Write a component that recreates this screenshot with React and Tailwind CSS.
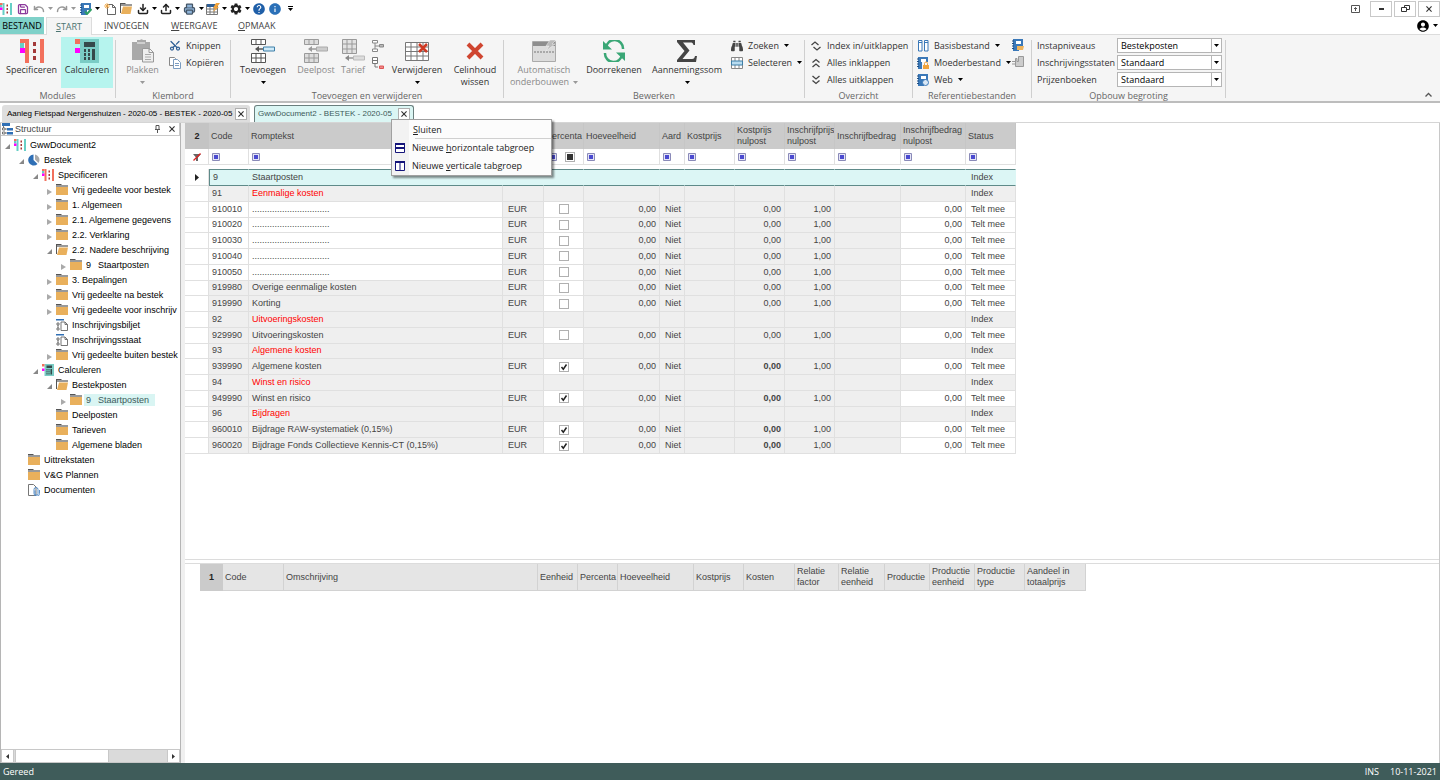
import React, { useState } from 'react';
import { Download, Upload, Undo, Redo, Save, Printer, Scissors } from 'lucide-react';
import { MdAccountCircle, MdHelp, MdInfo, MdSettings } from 'react-icons/md';
import { FaBinoculars } from 'react-icons/fa';

const Caret = ({ className = 'text-black' }) => (
  <svg className={`w-[5px] h-[3px] shrink-0 ${className}`} viewBox="0 0 5 3">
    <path d="M0 0h5L2.5 3z" fill="currentColor" />
  </svg>
);

/* ---------- Icons ---------- */

const LogoIcon = ({ color = '#66cfc6', className = 'w-3 h-3' }) => (
  <svg className={`shrink-0 ${className}`} viewBox="0 0 24 24">
    <path d="M5 0h4v24H5zM20 0h4v24h-4z" fill={color} />
    <path d="M0 0h5v4H0z" fill="#f2705c" />
    <path d="M0 4h4v5H0z" fill="#66cfc6" />
    <path d="M0 9h5v5H0z" fill="#f0f" />
    <path d="M13 3h3v4h-3zM13 10h3v4h-3zM13 17h3v4h-3z" fill="#a33a3a" />
  </svg>
);

const CalcIcon = ({ className = 'w-6 h-6' }) => (
  <svg className={`shrink-0 ${className}`} viewBox="0 0 24 24">
    <path d="M5 0h19v24H5z" fill="#7accc5" />
    <path d="M0 0h5v5H0z" fill="#f2705c" />
    <path d="M0 9h5v5H0z" fill="#f0f" />
    <path d="M9 3h11v5H9zM9 10h2v3H9zM9 14h2v3H9zM9 18h2v3H9zM13 10h2v3h-2zM13 14h2v3h-2zM13 18h2v3h-2zM17 10h3v11h-3z" fill="#35484a" />
  </svg>
);

const FolderIcon = ({ open }) => (
  <svg className="w-3 h-[11px] shrink-0" viewBox="0 0 12 11">
    <path d="M0 0h5l1 1H0z" fill="#555" />
    <path d="M0 1h12v2H0z" fill="#999" />
    {open ? (
      <>
        <path d="M0 1h1v9H0z" fill="#555" />
        <path d="M3 3.500h9L10.500 11H1z" fill="#e9b05c" />
      </>
    ) : (
      <path d="M0 3h12v8H0z" fill="#e9b05c" />
    )}
  </svg>
);

const PieIcon = () => (
  <svg className="w-3 h-3 shrink-0" viewBox="0 0 12 12">
    <path d="M5.500 0.500A5.500 5.500 0 1 0 9.500 10L5.500 6z" fill="#2f6fb5" />
    <path d="M7 0.500A5.500 5.500 0 0 1 10.500 9L7 5.500z" fill="#a9a9a9" />
  </svg>
);

const PageIcon = () => (
  <svg className="w-3 h-3 shrink-0" viewBox="0 0 12 12" fill="none" stroke="#666" strokeWidth="0.900">
    <path d="M0 0h8v1.500H0z" fill="#2f6fb5" stroke="none" />
    <path d="M5 3h4l2.500 2.500v6H5zM9 3v2.500h2.500" fill="#fff" />
    <path d="M1 4h2v2H1zM1 9h2v2H1zM2 6v3" />
  </svg>
);

const DocIcon = () => (
  <svg className="w-3 h-3 shrink-0" viewBox="0 0 12 12" fill="none">
    <path d="M0.500 0.500h5l2.500 2.500v8.500H0.500z" fill="#fff" stroke="#777" />
    <path d="M7 6.500v3a1.500 1.500 0 0 0 3 0V5.500a2 2 0 0 0-4 0v4a2.500 2.500 0 0 0 5.500 0V6" stroke="#4a86c5" strokeWidth="0.900" />
  </svg>
);

const BookIcon = ({ badge, className = 'w-3 h-3' }) => (
  <svg className={`shrink-0 ${className}`} viewBox="0 0 12 12">
    <path d="M1 0h10v7H7v5H1z" fill="#3a78b8" />
    <path d="M4 2h5v3H4z" fill="#fff" />
    <path d="M0 2h2M0 4.500h2M0 7h2M0 9.500h2" stroke="#1f4f83" />
    {badge === 'check' && <path d="M5 8.500l2 2.500 4.500-5" fill="none" stroke="#2f9e64" strokeWidth="2" />}
    {badge === 'lock' && (
      <>
        <path d="M5 5h7v7H5z" fill="#f5f5f5" />
        <path d="M6 8h6v4H6z" fill="#f0a33c" />
        <path d="M7.500 8V6.500a1.500 1.500 0 0 1 3 0V8" fill="none" stroke="#f0a33c" />
      </>
    )}
    {badge === 'web' && <circle cx="8.500" cy="8.500" r="3" fill="#d9e7f5" stroke="#3a78b8" />}
    {badge === 'folder' && <path d="M5 7h7l-1 4H5z" fill="#f0b45c" />}
  </svg>
);

const InsertIcon = ({ muted }) => {
  const line = muted ? '#9a9a9a' : '#555';
  return (
    <svg className="w-6 h-6" viewBox="0 0 24 24" fill="none" stroke={line}>
      <path d="M0.500 0.500h14v5h-14zM5 0.500v5M10 0.500v5M0.500 14.500h14v9h-14zM0.500 19h14M5 14.500v9M10 14.500v9" fill={muted ? '#ddd' : '#fff'} />
      <path d="M12.500 8h11v4h-11z" fill={muted ? '#ccc' : '#cfeaf8'} stroke={muted ? '#aaa' : '#3d7fa8'} />
      <path d="M12 10H6" strokeWidth="1.500" />
      <path d="M4 10l4-3v6z" fill={line} stroke="none" />
    </svg>
  );
};

const TariefIcon = () => (
  <svg className="w-6 h-6" viewBox="0 0 24 24" fill="none" stroke="#999">
    <path d="M1.500 0.500h14v14h-14zM6 0.500v14M11 0.500v14M1.500 5h14M1.500 10h14" fill="#e2e2e2" />
    <path d="M12.500 17h11v4h-11z" fill="#ddd" stroke="#bbb" />
    <path d="M12 19H7" strokeWidth="1.500" />
    <path d="M4 19l4-3v6z" fill="#888" stroke="none" />
  </svg>
);

const BranchIcon = () => (
  <svg className="w-3 h-3" viewBox="0 0 12 12" fill="none" stroke="#888">
    <path d="M0.500 0.500h5v2.500h-5zM0.500 9h5v2.500h-5zM3 3v6M3 6h4" fill="#fff" />
    <path d="M7.500 4.500h4v2.500h-4z" fill="#bbb" />
  </svg>
);

const BranchRemoveIcon = () => (
  <svg className="w-3 h-3" viewBox="0 0 12 12" fill="none" stroke="#777">
    <path d="M0.500 0.500h5v6h-5zM0.500 3.500h5M3 6.500V10h3" fill="#fff" />
    <path d="M7.500 9h4v2.500h-4z" fill="#e88" stroke="#d55" />
  </svg>
);

const DeleteGridIcon = () => (
  <svg className="w-6 h-[22px]" viewBox="0 0 24 22" fill="none" stroke="#777">
    <path d="M0.500 2.500h23v18h-23zM6 2.500v18M12 2.500v18M18 2.500v18M0.500 7h23M0.500 11.500h23M0.500 16h23" fill="#fff" />
    <path d="M14 4l8 8M22 4l-8 8" stroke="#cf3a24" strokeWidth="2.500" />
  </svg>
);

const RedCrossIcon = () => (
  <svg className="w-[18px] h-[18px]" viewBox="0 0 18 18">
    <path d="M2 2l14 14M16 2L2 16" stroke="#cf4530" strokeWidth="4" />
  </svg>
);

const PasteIcon = () => (
  <svg className="w-[22px] h-6" viewBox="0 0 22 24">
    <path d="M0 3h5V1h3a2 2 0 0 1 3 0h3v2h4v8h-8v10H0z" fill="#a9a9a9" />
    <path d="M5 4h8" stroke="#f5f5f5" />
    <path d="M10.500 9.500h7l4 4v9.500h-11zM17 9.500v4h4.500" fill="#eee" stroke="#999" />
    <path d="M13 15.500h6M13 18h6M13 20.500h6" stroke="#aaa" />
  </svg>
);

const CopyIcon = () => (
  <svg className="w-3 h-3" viewBox="0 0 12 12" fill="#fff" stroke="#888">
    <path d="M0.500 0.500h5l1 1v7h-6z" />
    <path d="M4.500 2.500h4l3 3v6h-7z" stroke="#7b9cc0" />
    <path d="M6 6.500h4M6 8.500h4" stroke="#7b9cc0" />
  </svg>
);

const AutoIcon = () => (
  <svg className="w-6 h-[22px]" viewBox="0 0 24 22">
    <path d="M0.500 1.500h23v20h-23z" fill="#dcdcdc" stroke="#aaa" />
    <path d="M1 2h22v4H1z" fill="#8e8e8e" />
    <path d="M2 12h20" stroke="#777" strokeDasharray="2 1" />
    <path d="M18 0h6l-4 4h3l-9 7 3-5h-3z" fill="#bbb" stroke="#f5f5f5" strokeWidth="0.500" />
  </svg>
);

const RecalcIcon = () => (
  <svg className="w-6 h-[22px]" viewBox="0 0 24 22" fill="none" stroke="#3aa776" strokeWidth="2.500">
    <path d="M4 8A8.500 8.500 0 0 1 21 9" />
    <path d="M20 14A8.500 8.500 0 0 1 3 13" />
    <path d="M1 1v8.500h9zM23 21v-8.500h-9z" fill="#3aa776" stroke="none" />
  </svg>
);

const SigmaIcon = () => (
  <svg className="w-5 h-[22px]" viewBox="0 0 20 22">
    <path d="M0 0h18v5h-1.500c-.5-2-1.500-2.500-3-2.500H6l6.500 8L5.500 19H15c2 0 2.500-1 3-3h2l-1 6H0v-2l7.500-9L0 2z" fill="#444" />
  </svg>
);

const SelectIcon = () => (
  <svg className="w-3 h-3" viewBox="0 0 12 12" fill="#fff" stroke="#888">
    <path d="M0.500 0.500h11v11h-11zM4 0.500v11M8 0.500v11" />
    <path d="M0.500 4h11v4h-11z" fill="#b9dcf0" stroke="#3d7fa8" />
  </svg>
);

const FoldIcon = ({ d }) => (
  <svg className="w-[10px] h-[10px]" viewBox="0 0 10 10" fill="none" stroke="#444" strokeWidth="1.300">
    <path d={d} />
  </svg>
);

const ColumnsIcon = () => (
  <svg className="w-[11px] h-3" viewBox="0 0 11 12" fill="#fff" stroke="#3a78b8">
    <path d="M0.500 0.500h3.500v10.500H0.500zM6.500 0.500H10v10.500H6.500z" />
    <path d="M0.500 2.500H4M6.500 2.500H10" />
  </svg>
);

const TableFlashIcon = () => (
  <svg className="w-[14px] h-3" viewBox="0 0 14 12" fill="#fff" stroke="#777">
    <path d="M0.500 1.500h11v10h-11zM0.500 6h11M0.500 9h11M4 1.500v10M8 1.500v10" />
    <path d="M1 1h8v3H1z" fill="#2f5f95" stroke="none" />
    <path d="M10 0h4l-3 4h2l-6 5 2-4H7z" fill="#f0a33c" stroke="none" />
  </svg>
);

const NewDocIcon = () => (
  <svg className="w-3 h-3" viewBox="0 0 12 12">
    <path d="M3.500 1.500h5l3 3v7h-8z" fill="#fff" stroke="#666" />
    <path d="M8.500 1.500v3h3" fill="none" stroke="#666" />
    <path d="M3 0v6M0 3h6M1 1l4 4M5 1L1 5" stroke="#f0a33c" strokeWidth="0.800" />
  </svg>
);

const StructIcon = () => (
  <svg className="w-3 h-3 shrink-0" viewBox="0 0 12 12">
    <path d="M1 0h8v3H1zM6 5h6v2.500H6zM6 9h6v2.500H6z" fill="#2f6fb5" />
    <path d="M1.500 5h2.500v2H1.500zM1.500 9h2.500v2H1.500zM4 6h2M4 10h2M2.500 3v2" fill="#fff" stroke="#555" strokeWidth="0.800" />
  </svg>
);

const CrossIcon = () => (
  <svg className="w-[6px] h-[6px]" viewBox="0 0 7 7" stroke="#333" strokeWidth="1.300">
    <path d="M0.500 0.500l6 6M6.500 0.500l-6 6" />
  </svg>
);

/* ---------- Ribbon ---------- */

const BigButton = ({ icon, lines, width, caret, muted, active, inlineCaret }) => (
  <button
    type="button"
    className={`${width} h-[51px] shrink-0 flex flex-col items-center text-center pt-px leading-[12px] whitespace-nowrap ${
      active ? 'bg-[#b6f4ee]' : ''
    } ${muted ? 'text-[#8a8a8a]' : 'text-[#333]'}`}
  >
    <span className="h-[26px] flex items-center justify-center">{icon}</span>
    {lines.map((line, i) => (
      <span key={line} className="flex items-center gap-1">
        {line}
        {inlineCaret && i === lines.length - 1 && <Caret className="text-[#999]" />}
      </span>
    ))}
    {caret && (
      <span className="h-3 flex items-center">
        <Caret className={muted ? 'text-[#999]' : 'text-black'} />
      </span>
    )}
  </button>
);

const SmallButton = ({ icon, children, caret }) => (
  <button type="button" className="h-[17px] flex items-center gap-[5px] whitespace-nowrap text-[#333]">
    <span className="w-3 flex justify-center">{icon}</span>
    {children}
    {caret && <Caret />}
  </button>
);

const Group = ({ title, width, children }) => (
  <section className={`${width} shrink-0 flex flex-col`}>
    <div className="flex border-r border-[#cfcfcf] mt-1 h-[58px]">
      <div className="flex flex-col w-full -mt-[3px]">
        <div className="flex h-[53px] shrink-0">{children}</div>
        <h2 className="shrink-0 text-center text-[#666] leading-[12px]">{title}</h2>
      </div>
    </div>
  </section>
);

const LabelledSelect = ({ id, label, value }) => (
  <div className="h-[17px] flex items-center">
    <label htmlFor={id} className="w-20 whitespace-nowrap">{label}</label>
    <div className="grid w-[105px] h-[15px] bg-white border border-[#b5b5b5]">
      <select id={id} defaultValue={value} className="col-start-1 row-start-1 appearance-none pl-[3px] leading-[13px] text-black">
        <option>{value}</option>
      </select>
      <span className="col-start-1 row-start-1 justify-self-end w-[10px] border-l border-[#b5b5b5] flex items-center justify-center pointer-events-none">
        <Caret />
      </span>
    </div>
  </div>
);

const quickItems = [
  { name: 'Opslaan', icon: <Save className="w-3 h-3 text-[#8c3a9c]" strokeWidth={2.5} />, width: 'w-4' },
  { name: 'Ongedaan maken', icon: <Undo className="w-3 h-3 text-[#999]" strokeWidth={3} />, width: 'w-4', caret: 'text-[#999]' },
  { name: 'Opnieuw', icon: <Redo className="w-3 h-3 text-[#999]" strokeWidth={3} />, width: 'w-4', caret: 'text-[#999]' },
  { name: 'Controleren', icon: <BookIcon badge="check" />, width: 'w-[17px]', caret: 'text-black' },
  { name: 'Nieuw', icon: <NewDocIcon />, width: 'w-[17px]' },
  { name: 'Openen', icon: <FolderIcon open />, width: 'w-4' },
  { name: 'Importeren', icon: <Download className="w-3 h-3 text-[#222]" strokeWidth={3} />, width: 'w-[17px]', caret: 'text-black' },
  { name: 'Exporteren', icon: <Upload className="w-3 h-3 text-[#222]" strokeWidth={3} />, width: 'w-4', caret: 'text-black' },
  { name: 'Afdrukken', icon: <Printer className="w-[13px] h-3 text-[#456]" fill="#8fb4d8" strokeWidth={2.5} />, width: 'w-[17px]', caret: 'text-black' },
  { name: 'Tabel', icon: <TableFlashIcon />, width: 'w-4', caret: 'text-black' },
  { name: 'Instellingen', icon: <MdSettings className="w-[14px] h-[14px] text-[#222]" />, width: 'w-4', caret: 'text-black' },
  { name: 'Help', icon: <MdHelp className="w-[14px] h-[14px] text-[#1f5fa8]" />, width: 'w-4' },
  { name: 'Info', icon: <MdInfo className="w-[14px] h-[14px] text-[#2a70b8]" />, width: 'w-4' },
];

function TitleBar() {
  return (
    <header className="flex h-[17px] items-center">
      <LogoIcon />
      <div className="flex items-center pl-[3px]">
        {quickItems.map(({ name, icon, width, caret }) => (
          <button key={name} type="button" aria-label={name} className="flex items-center">
            <span className={`${width} flex justify-center`}>{icon}</span>
            {caret && <span className="w-[7px] flex justify-center"><Caret className={caret} /></span>}
          </button>
        ))}
        <button type="button" aria-label="Meer" className="w-[14px] flex flex-col items-center gap-px">
          <span className="w-[5px] h-px bg-black" />
          <Caret />
        </button>
      </div>
      <div className="ml-auto flex items-center gap-[2px]">
        <button type="button" aria-label="Lint" className="w-[26px] flex justify-center">
          <svg className="w-[9px] h-2" viewBox="0 0 9 8" fill="none" stroke="#555">
            <path d="M0.500 0.500h8v7h-8zM4.500 6V2.500M3 4l1.500-1.500L6 4" />
          </svg>
        </button>
        <button type="button" aria-label="Minimaliseren" className="w-[22px] h-4 border border-[#c8c8c8] flex items-center justify-center">
          <span className="w-[5px] h-[2px] bg-[#333]" />
        </button>
        <button type="button" aria-label="Herstellen" className="w-[22px] h-4 border border-[#c8c8c8] flex items-center justify-center">
          <svg className="w-[9px] h-2" viewBox="0 0 9 8" fill="#fff" stroke="#333">
            <path d="M3.500 0.500h5v4h-5z" />
            <path d="M0.500 2.500h5v4h-5z" />
          </svg>
        </button>
        <button type="button" aria-label="Afsluiten" className="w-[22px] h-4 border border-[#c8c8c8] flex items-center justify-center">
          <CrossIcon />
        </button>
      </div>
    </header>
  );
}

function RibbonTabs() {
  return (
    <nav className="flex h-[18px] items-end border-b border-[#dcdcdc] text-[#444]">
      <a href="#bestand" className="w-11 h-[17px] bg-[#7fd1c9] text-center leading-[18px] text-black">BESTAND</a>
      <a href="#start" className="w-[46px] h-[18px] ml-[2px] -mb-px bg-[#f5f5f5] border border-b-0 border-[#dcdcdc] text-center leading-[18px] text-[#4c7471]">
        <u>S</u>TART
      </a>
      <a href="#invoegen" className="ml-[12px] w-[43px] leading-[17px]"><u>I</u>NVOEGEN</a>
      <a href="#weergave" className="ml-[24px] w-[44px] leading-[17px]"><u>W</u>EERGAVE</a>
      <a href="#opmaak" className="ml-[23px] leading-[17px]"><u>O</u>PMAAK</a>
      <button type="button" aria-label="Account" className="ml-auto h-[17px] pr-[2px] flex items-center gap-[3px]">
        <MdAccountCircle className="w-[14px] h-[14px] text-black" />
        <Caret />
      </button>
    </nav>
  );
}

function Ribbon() {
  return (
    <div className="flex h-[68px] bg-[#f5f5f5] border-b-2 border-[#bdbdbd] pt-px">
      <Group title="Modules" width="w-[116px]">
        <span className="w-[2px]" />
        <BigButton width="w-[59px]" lines={['Specificeren']} icon={<LogoIcon color="#f2705c" className="w-6 h-6" />} />
        <BigButton width="w-[52px]" lines={['Calculeren']} active icon={<CalcIcon />} />
      </Group>
      <Group title="Klembord" width="w-[115px]">
        <BigButton width="w-[53px]" lines={['Plakken']} muted caret icon={<PasteIcon />} />
        <div className="flex flex-col">
          <SmallButton icon={<Scissors className="w-[13px] h-[13px] -rotate-90 text-[#2f5f95]" strokeWidth={2.5} />}>Knippen</SmallButton>
          <SmallButton icon={<CopyIcon />}>Kopiëren</SmallButton>
        </div>
      </Group>
      <Group title="Toevoegen en verwijderen" width="w-[273px]">
        <BigButton width="w-[64px]" lines={['Toevoegen']} caret icon={<InsertIcon />} />
        <BigButton width="w-[42px]" lines={['Deelpost']} muted icon={<InsertIcon muted />} />
        <BigButton width="w-[32px]" lines={['Tarief']} muted icon={<TariefIcon />} />
        <div className="w-[18px] flex flex-col items-center gap-[5px] pt-[3px]">
          <button type="button" aria-label="Niveau toevoegen"><BranchIcon /></button>
          <button type="button" aria-label="Niveau verwijderen"><BranchRemoveIcon /></button>
        </div>
        <BigButton width="w-[60px]" lines={['Verwijderen']} caret icon={<DeleteGridIcon />} />
        <BigButton width="w-[56px]" lines={['Celinhoud', 'wissen']} icon={<RedCrossIcon />} />
      </Group>
      <Group title="Bewerken" width="w-[301px]">
        <BigButton width="w-[80px]" lines={['Automatisch', 'onderbouwen']} muted inlineCaret icon={<AutoIcon />} />
        <BigButton width="w-[60px]" lines={['Doorrekenen']} icon={<RecalcIcon />} />
        <BigButton width="w-[86px]" lines={['Aannemingssom']} caret icon={<SigmaIcon />} />
        <div className="flex flex-col items-start pl-px">
          <SmallButton caret icon={<FaBinoculars className="w-3 h-3 text-[#444]" />}>Zoeken</SmallButton>
          <SmallButton caret icon={<SelectIcon />}>Selecteren</SmallButton>
        </div>
      </Group>
      <Group title="Overzicht" width="w-[108px]">
        <div className="flex flex-col items-start pl-[5px]">
          <SmallButton icon={<FoldIcon d="M0.500 4L4 1l3.500 3M2.500 6L6 9l3.500-3" />}>Index in/uitklappen</SmallButton>
          <SmallButton icon={<FoldIcon d="M1.500 4.500L5 1.500l3.500 3M1.500 9L5 6l3.500 3" />}>Alles inklappen</SmallButton>
          <SmallButton icon={<FoldIcon d="M1.500 1L5 4l3.500-3M1.500 5.500L5 8.500l3.500-3" />}>Alles uitklappen</SmallButton>
        </div>
      </Group>
      <Group title="Referentiebestanden" width="w-[119px]">
        <div className="flex flex-col items-start pl-[4px]">
          <SmallButton caret icon={<ColumnsIcon />}>Basisbestand</SmallButton>
          <SmallButton caret icon={<BookIcon badge="lock" />}>Moederbestand</SmallButton>
          <SmallButton caret icon={<BookIcon badge="web" />}>Web</SmallButton>
        </div>
        <div className="ml-auto pr-[7px] flex flex-col gap-[5px] pt-[2px]">
          <button type="button" aria-label="Bestand openen"><BookIcon badge="folder" /></button>
          <button type="button" aria-label="Bestand sluiten">
            <svg className="w-3 h-3" viewBox="0 0 12 12"><path d="M3.500 2.500H5v3h1.500v-5h5v10h-8zM0 5.500h3M0 8h3" fill="#ccc" stroke="#999" /></svg>
          </button>
        </div>
      </Group>
      <Group title="Opbouw begroting" width="w-[194px]">
        <div className="flex flex-col pl-[5px] text-[#333]">
          <LabelledSelect id="instap" label="Instapniveaus" value="Bestekposten" />
          <LabelledSelect id="staten" label="Inschrijvingsstaten" value="Standaard" />
          <LabelledSelect id="boeken" label="Prijzenboeken" value="Standaard" />
        </div>
      </Group>
      <button type="button" aria-label="Lint inklappen" className="ml-auto self-end p-2 pb-1">
        <svg className="w-[7px] h-[5px]" viewBox="0 0 7 5" fill="none" stroke="#555" strokeWidth="1.300"><path d="M0.500 4.500l3-3 3 3" /></svg>
      </button>
    </div>
  );
}

function TabMenu() {
  return (
    <div role="menu" className="absolute left-[136px] top-[13px] z-20 w-[161px] h-[57px] bg-[#fcfcfc] border border-[#a0a0a0] shadow-[2px_2px_2px_rgba(0,0,0,0.45)] text-[9px] text-[#222] font-['Open_Sans',sans-serif]">
      <div className="h-full border-l-[17px] border-[#f2f2f2] flex flex-col">
        <button type="button" role="menuitem" className="h-[18px] shrink-0 pl-1 pt-px text-left"><u>S</u>luiten</button>
        <hr className="ml-[6px] border-[#d0d0d0]" />
        <button type="button" role="menuitem" className="h-[18px] shrink-0 flex items-center gap-[7px] -ml-[14px] whitespace-nowrap">
          <svg className="w-[10px] h-[10px]" viewBox="0 0 10 10"><path d="M0.500 0.500h9v9h-9z" fill="#fff" stroke="#14147a" /><path d="M0 0h10v2H0zM0 4h10v2H0z" fill="#14147a" /></svg>
          <span>Nieuwe <u>h</u>orizontale tabgroep</span>
        </button>
        <button type="button" role="menuitem" className="h-[17px] shrink-0 flex items-center gap-[7px] -ml-[14px] whitespace-nowrap">
          <svg className="w-[10px] h-[10px]" viewBox="0 0 10 10"><path d="M0.500 0.500h9v9h-9zM5 0v10" fill="#fff" stroke="#14147a" /><path d="M0 0h10v2H0z" fill="#14147a" /></svg>
          <span>Nieuwe <u>v</u>erticale tabgroep</span>
        </button>
      </div>
    </div>
  );
}

function DocumentTabs() {
  return (
    <div className="flex h-[20px] pt-[2px] pl-[2px] gap-1 items-end border-b border-[#d5d5d5] font-['Liberation_Sans',Arial,sans-serif] text-[8px]">
      <div className="w-[248px] h-[17px] bg-[#dedede] rounded-t-[3px] flex items-center pl-[5px] pr-[3px] text-black whitespace-nowrap">
        Aanleg Fietspad Nergenshuizen - 2020-05 - BESTEK - 2020-05
        <button type="button" aria-label="Sluiten" className="ml-auto w-3 h-3 bg-white border border-[#b0b0b0] flex items-center justify-center"><CrossIcon /></button>
      </div>
      <div className="relative w-[160px] h-[17px] bg-[#dbf6f4] border border-b-0 border-[#6a7f7e] rounded-t-[3px] flex items-center pl-[3px] pr-[3px] text-[#3c5a5a] whitespace-nowrap">
        GwwDocument2 - BESTEK - 2020-05
        <button type="button" aria-label="Sluiten" className="ml-auto w-3 h-3 bg-white border border-[#b0b0b0] flex items-center justify-center"><CrossIcon /></button>
        <TabMenu />
      </div>
    </div>
  );
}

/* ---------- Structure tree ---------- */

const tree = [
  { level: 0, text: 'GwwDocument2', icon: <LogoIcon />, state: 'open' },
  { level: 1, text: 'Bestek', icon: <PieIcon />, state: 'open' },
  { level: 2, text: 'Specificeren', icon: <LogoIcon color="#f2705c" />, state: 'open' },
  { level: 3, text: 'Vrij gedeelte voor bestek', state: 'closed' },
  { level: 3, text: '1. Algemeen', state: 'closed' },
  { level: 3, text: '2.1. Algemene gegevens', state: 'closed' },
  { level: 3, text: '2.2. Verklaring', state: 'closed' },
  { level: 3, text: '2.2. Nadere beschrijving', icon: <FolderIcon open />, state: 'open' },
  { level: 4, text: 'Staartposten', code: '9', state: 'closed' },
  { level: 3, text: '3. Bepalingen', state: 'closed' },
  { level: 3, text: 'Vrij gedeelte na bestek', state: 'closed' },
  { level: 3, text: 'Vrij gedeelte voor inschrijv', state: 'closed' },
  { level: 3, text: 'Inschrijvingsbiljet', icon: <PageIcon /> },
  { level: 3, text: 'Inschrijvingsstaat', icon: <PageIcon /> },
  { level: 3, text: 'Vrij gedeelte buiten bestek', state: 'closed' },
  { level: 2, text: 'Calculeren', icon: <CalcIcon className="w-3 h-3" />, state: 'open' },
  { level: 3, text: 'Bestekposten', icon: <FolderIcon open />, state: 'open' },
  { level: 4, text: 'Staartposten', code: '9', state: 'closed', selected: true },
  { level: 3, text: 'Deelposten' },
  { level: 3, text: 'Tarieven' },
  { level: 3, text: 'Algemene bladen' },
  { level: 1, text: 'Uittrekstaten' },
  { level: 1, text: 'V&G Plannen' },
  { level: 1, text: 'Documenten', icon: <DocIcon /> },
];

const indent = ['pl-[4px]', 'pl-[18px]', 'pl-[32px]', 'pl-[46px]', 'pl-[60px]'];

function TreePanel() {
  return (
    <aside className="w-[181px] shrink-0 flex flex-col border-l border-r border-[#b5b5b5]">
      <div className="h-[13px] flex items-center border-b border-r border-[#c8c8c8] text-[#444]">
        <StructIcon />
        <span className="pl-[2px]">Structuur</span>
        <button type="button" aria-label="Vastzetten" className="ml-auto pr-[9px]">
          <svg className="w-[5px] h-2" viewBox="0 0 5 8" fill="none" stroke="#555"><path d="M1 0.500h3v4H1zM0 4.500h5M2.500 4.500V8" /></svg>
        </button>
        <button type="button" aria-label="Sluiten" className="pr-1"><CrossIcon /></button>
      </div>
      <ul className="flex-1 overflow-hidden pt-px text-black">
        {tree.map((node, i) => (
          <li key={i} className={`h-[15px] flex items-center whitespace-nowrap ${indent[node.level]}`}>
            <span className="w-[9px] shrink-0 pt-1">
              {node.state === 'open' && <svg className="w-[5px] h-[5px]" viewBox="0 0 5 5"><path d="M5 0v5H0z" fill="#888" /></svg>}
              {node.state === 'closed' && <svg className="w-[5px] h-[6px]" viewBox="0 0 5 6"><path d="M0 0l5 3-5 3z" fill="#aaa" /></svg>}
            </span>
            {node.icon || <FolderIcon />}
            <span className={`ml-[2px] px-[2px] leading-[12px] ${node.selected ? 'bg-[#d9f5f3] text-[#3c5a5a] pr-[6px]' : ''}`}>
              {node.code && <span className="inline-block w-3">{node.code}</span>}
              {node.text}
            </span>
          </li>
        ))}
      </ul>
      <div className="h-[14px] flex gap-px bg-[#dadada] border border-[#c8c8c8]">
        <button type="button" aria-label="Naar links" className="w-3 bg-white border-r border-[#c8c8c8] flex items-center justify-center">
          <svg className="w-[3px] h-[5px]" viewBox="0 0 3 5"><path d="M3 0v5L0 2.500z" fill="#333" /></svg>
        </button>
        <div className="w-[94px] bg-white border-x border-[#c8c8c8]" />
        <button type="button" aria-label="Naar rechts" className="ml-auto w-3 bg-white border-l border-[#c8c8c8] flex items-center justify-center">
          <svg className="w-[3px] h-[5px]" viewBox="0 0 3 5"><path d="M0 0v5l3-2.500z" fill="#333" /></svg>
        </button>
      </div>
    </aside>
  );
}

/* ---------- Grids ---------- */

const columns = [
  { title: 'Code', width: 'w-[40px]' },
  { title: 'Romptekst', width: 'w-[254px]' },
  { title: 'Eenheid', width: 'w-[41px]' },
  { title: 'Percenta', width: 'w-[40px]' },
  { title: 'Hoeveelheid', width: 'w-[76px]' },
  { title: 'Aard', width: 'w-[25px]' },
  { title: 'Kostprijs', width: 'w-[50px]' },
  { title: 'Kostprijs nulpost', width: 'w-[50px]' },
  { title: 'Inschrijfprijs nulpost', width: 'w-[50px]' },
  { title: 'Inschrijfbedrag', width: 'w-[66px]' },
  { title: 'Inschrijfbedrag nulpost', width: 'w-[65px]' },
  { title: 'Status', width: 'w-[50px]' },
];

const dots = '...............................';

const posts = [
  { code: '9', text: 'Staartposten', index: true, selected: true },
  { code: '91', text: 'Eenmalige kosten', index: true },
  { code: '910010', text: dots, open: true },
  { code: '910020', text: dots, open: true },
  { code: '910030', text: dots, open: true },
  { code: '910040', text: dots, open: true },
  { code: '910050', text: dots, open: true },
  { code: '919980', text: 'Overige eenmalige kosten' },
  { code: '919990', text: 'Korting' },
  { code: '92', text: 'Uitvoeringskosten', index: true },
  { code: '929990', text: 'Uitvoeringskosten' },
  { code: '93', text: 'Algemene kosten', index: true },
  { code: '939990', text: 'Algemene kosten', percent: true },
  { code: '94', text: 'Winst en risico', index: true },
  { code: '949990', text: 'Winst en risico', percent: true },
  { code: '96', text: 'Bijdragen', index: true },
  { code: '960010', text: 'Bijdrage RAW-systematiek (0,15%)', percent: true },
  { code: '960020', text: 'Bijdrage Fonds Collectieve Kennis-CT (0,15%)', percent: true },
];

const FilterIcon = () => (
  <svg className="w-2 h-2" viewBox="0 0 8 8">
    <path d="M0.500 0.500h7v7h-7z" fill="#e4e4f6" stroke="#8a8ab8" />
    <path d="M2 2h4v4H2z" fill="#4a4ad0" />
  </svg>
);

function PercentBox({ code, initial }) {
  const [checked, setChecked] = useState(initial);
  return (
    <span className="grid w-[10px] h-[10px] mx-auto">
      <input
        type="checkbox"
        aria-label={`Percentage ${code}`}
        checked={checked}
        onChange={(e) => setChecked(e.target.checked)}
        className="col-start-1 row-start-1 appearance-none w-[10px] h-[10px] bg-white border border-[#b0b0b0]"
      />
      {checked && (
        <svg className="col-start-1 row-start-1 w-[10px] h-[10px] pointer-events-none" viewBox="0 0 10 10" fill="none" stroke="#222" strokeWidth="1.500">
          <path d="M2.500 5l1.800 2.200L7.500 2.500" />
        </svg>
      )}
    </span>
  );
}

function PostRow({ post }) {
  const { code, text, index, selected, open, percent } = post;
  const tone = selected
    ? 'bg-[#dcf6f5] border-t border-t-[#5f8a89] border-b-[#5f8a89] border-r-[#dcf6f5]'
    : 'border-[#e0e0e0]';
  const cell = `border-b border-r py-0 px-[3px] ${tone}`;
  const grey = selected ? '' : 'bg-[#efefef]';
  const own = open ? 'bg-white' : grey;
  const num = `${cell} ${grey} text-right`;
  const bold = percent ? 'font-bold' : '';
  const value = (v) => (index ? '' : v);

  return (
    <tr>
      <td className="bg-white border-b border-r border-[#e0e0e0] p-0">
        {selected && <svg className="mx-auto w-1 h-[7px]" viewBox="0 0 4 7"><path d="M0 0v7l4-3.500z" fill="#222" /></svg>}
      </td>
      <td className={`${cell} ${own} ${selected ? 'border-l border-l-[#5f8a89]' : ''}`}>{code}</td>
      <td className={`${cell} ${own} ${index && !selected ? 'text-[#ff0000]' : ''} whitespace-nowrap`}>{text}</td>
      <td className={`${cell} ${grey} pl-[5px]`}>{value('EUR')}</td>
      <td className={`${cell} ${index ? grey : 'bg-white'}`}>{!index && <PercentBox code={code} initial={!!percent} />}</td>
      <td className={num}>{value('0,00')}</td>
      <td className={`${cell} ${grey} pl-[5px]`}>{value('Niet')}</td>
      <td className={num} />
      <td className={`${num} ${bold}`}>{value('0,00')}</td>
      <td className={num}>{value('1,00')}</td>
      <td className={num} />
      <td className={`${cell} ${index ? grey : 'bg-white'} text-right`}>{value('0,00')}</td>
      <td className={`${cell} ${index ? grey : 'bg-white'} pl-[5px] whitespace-nowrap ${selected ? 'border-r-[#5f8a89]' : ''}`}>{index ? 'Index' : 'Telt mee'}</td>
    </tr>
  );
}

function PostGrid() {
  return (
    <div className="flex-1 overflow-hidden border-b border-[#dcdcdc]">
      <table className="w-[831px] h-[331px] table-fixed border-separate border-spacing-0 text-[#444] leading-[11px]">
        <thead>
          <tr className="h-[26px] bg-[#cbcbcb]">
            <th className="w-[24px] p-0 bg-[#c4c4c4] text-[#222]">2</th>
            {columns.map(({ title, width }) => (
              <th key={title} className={`${width} p-0 pl-[2px] text-left font-normal overflow-hidden border-r border-[#c6c6c6]`}>{title}</th>
            ))}
          </tr>
          <tr className="h-4">
            <td className="p-0 border-b border-r border-[#e0e0e0]">
              <svg className="mx-auto w-2 h-2" viewBox="0 0 8 8"><path d="M0 1h8L5 4.500V8H3V4.500z" fill="#666" /><path d="M0.500 7.500l7-7" stroke="#e02020" strokeWidth="1.300" /></svg>
            </td>
            {columns.map(({ title }) => (
              <td key={title} className="p-0 pl-[3px] border-b border-r border-[#e0e0e0]">
                {title === 'Percenta' ? (
                  <span className="flex items-center gap-[8px] pl-[2px]">
                    <FilterIcon />
                    <span className="w-[10px] h-[10px] border border-[#b0b0b0] flex items-center justify-center"><span className="w-[6px] h-[6px] bg-[#333]" /></span>
                  </span>
                ) : (
                  <FilterIcon />
                )}
              </td>
            ))}
          </tr>
          <tr className="h-[4px]">
            <td colSpan={13} className="p-0" />
          </tr>
        </thead>
        <tbody>
          {posts.map((post) => <PostRow key={post.code} post={post} />)}
        </tbody>
      </table>
    </div>
  );
}

const detailColumns = [
  { title: 'Code', width: 'w-[61px]' },
  { title: 'Omschrijving', width: 'w-[254px]' },
  { title: 'Eenheid', width: 'w-[40px]' },
  { title: 'Percenta', width: 'w-[40px]' },
  { title: 'Hoeveelheid', width: 'w-[76px]' },
  { title: 'Kostprijs', width: 'w-[50px]' },
  { title: 'Kosten', width: 'w-[51px]' },
  { title: 'Relatie factor', width: 'w-[44px]' },
  { title: 'Relatie eenheid', width: 'w-[46px]' },
  { title: 'Productie', width: 'w-[45px]' },
  { title: 'Productie eenheid', width: 'w-[45px]' },
  { title: 'Productie type', width: 'w-[50px]' },
  { title: 'Aandeel in totaalprijs', width: 'w-[61px]' },
];

function DetailGrid() {
  return (
    <div className="h-[200px] shrink-0 mt-[3px] pl-[15px] border-t border-[#dcdcdc]">
      <table className="w-[886px] table-fixed border-separate border-spacing-0 text-[#444] leading-[11px]">
        <thead>
          <tr className="h-[27px] bg-[#e5e5e5]">
            <th className="w-[23px] p-0 bg-[#cbcbcb] text-[#222]">1</th>
            {detailColumns.map(({ title, width }) => (
              <th key={title} className={`${width} p-0 pl-[2px] text-left font-normal overflow-hidden border-r border-b border-[#d2d2d2]`}>{title}</th>
            ))}
          </tr>
        </thead>
      </table>
    </div>
  );
}

export default function App() {
  return (
    <div className="h-screen flex flex-col overflow-hidden bg-white text-[9px] leading-[12px] font-['Open_Sans','Noto_Sans',sans-serif]">
      <TitleBar />
      <RibbonTabs />
      <Ribbon />
      <DocumentTabs />
      <main className="flex-1 min-h-0 flex font-['Liberation_Sans',Arial,sans-serif]">
        <TreePanel />
        <div className="w-1 shrink-0 bg-[#f0f0f0]" />
        <div className="flex-1 min-w-0 flex flex-col border-r border-[#c8c8c8]">
          <PostGrid />
          <DetailGrid />
        </div>
      </main>
      <footer className="h-[17px] shrink-0 bg-[#3f5c5a] text-white flex items-center px-[3px] pt-px">
        <span>Gereed</span>
        <span className="ml-auto">INS</span>
        <span className="pl-[11px]">10-11-2021</span>
      </footer>
    </div>
  );
}
